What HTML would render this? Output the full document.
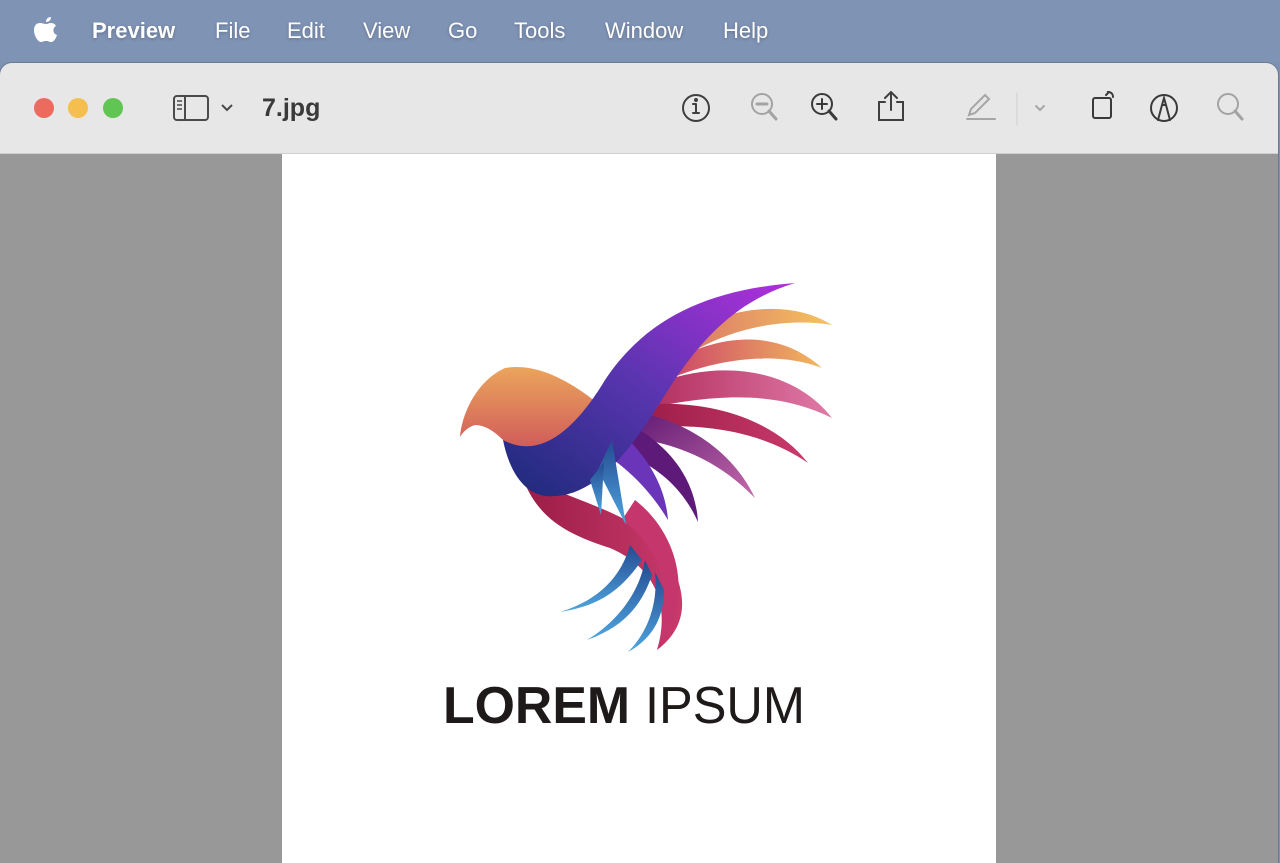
<!DOCTYPE html>
<html><head><meta charset="utf-8"><style>
body{margin:0;width:1280px;height:849px;overflow:hidden;background:#7d91b4;font-family:"Liberation Sans",sans-serif;position:relative}
.menu{position:absolute;left:0;top:0;width:1280px;height:62px;background:#7f93b5;color:#fff;font-size:22px}
.menu span{position:absolute;top:18px;text-shadow:0 1px 3px rgba(0,0,0,.25)}
.win{position:absolute;left:0;top:63px;width:1278px;height:800px;border-radius:12px 12px 0 0;overflow:hidden;background:#989898;box-shadow:0 0 0 1px #6c7b95}
.tb{position:absolute;left:0;top:0;width:100%;height:90px;background:#e7e7e7;border-bottom:1px solid #cfcfcf}
.dot{position:absolute;top:35px;width:20px;height:20px;border-radius:50%}
.page{position:absolute;left:282px;top:91px;width:714px;height:720px;background:#fff}
svg.i{position:absolute}
</style></head><body>
<div class="menu">
<svg style="position:absolute;left:33px;top:15px" width="26" height="30" viewBox="0 0 26 30"><path fill="#fff" d="M18 2c0 3-2 5-5 5 0-3 2-5 5-5zM13 9c2 0 3-1 5-1 2 0 4 1 5 3-4 2-3 8 1 9-1 3-3 7-6 7-2 0-2-1-5-1s-3 1-5 1c-3 0-7-6-7-12 0-5 3-7 6-7 2 0 4 1 6 1z"/></svg>
<span style="left:92px;font-weight:bold">Preview</span>
<span style="left:215px">File</span><span style="left:287px">Edit</span><span style="left:363px">View</span><span style="left:448px">Go</span><span style="left:514px">Tools</span><span style="left:605px">Window</span><span style="left:723px">Help</span>
</div>
<div class="win">
<div class="tb">
<div class="dot" style="left:34px;background:#ed6a5e"></div>
<div class="dot" style="left:68px;background:#f5bf4f"></div>
<div class="dot" style="left:103px;background:#61c554"></div>
<svg class="i" style="left:172px;top:32px" width="66" height="26" viewBox="0 0 66 26" fill="none" stroke="#4a4a4a" stroke-width="2"><rect x="2" y="1" width="34" height="24" rx="3"/><line x1="13" y1="1" x2="13" y2="25"/><path d="M5 6h5M5 10h5M5 14h5" stroke-width="1.5"/><path d="M50 10l5 5 5-5"/></svg>
<div style="position:absolute;left:262px;top:31px;font-size:25px;font-weight:bold;color:#3a3a3a">7.jpg</div>
<svg class="i" style="left:680px;top:28px" width="580" height="36" viewBox="680 91 580 36" fill="none" stroke-width="2" stroke-linecap="round">
<g stroke="#3f3f3f"><circle cx="696" cy="108" r="13"/><path d="M696 104v9M693 113h6M693 104h3" /><circle cx="696" cy="100" r="1" fill="#3f3f3f"/></g>
<g stroke="#a3a3a3"><circle cx="762" cy="104" r="10"/><path d="M757 104h10M769 111l7 8" stroke-width="3"/></g>
<g stroke="#3a3a3a"><circle cx="822" cy="104" r="10"/><path d="M817 104h10M822 99v10"/><path d="M829 111l7 8" stroke-width="3"/></g>
<g stroke="#3f3f3f"><path d="M885 102h-6v18h24v-18h-6M891 110v-17M885 98l6-6 6 6"/></g>
<g stroke="#a6a6a6"><path d="M969 115l2-6 14-14 4 4-14 14zM967 119h28"/><line x1="1017" y1="93" x2="1017" y2="125" stroke="#cfcfcf" stroke-width="1"/><path d="M1036 106l4 4 4-4"/></g>
<g stroke="#3a3a3a"><rect x="1093" y="98" width="18" height="20" rx="2"/><path d="M1108 92c3 0 5 2 5 5M1106 89l3 3-3 3"/></g>
<g stroke="#3a3a3a"><circle cx="1164" cy="108" r="13"/><path d="M1158 120l4-15h4l4 15M1162 105l2-7 2 7"/></g>
<g stroke="#a3a3a3"><circle cx="1228" cy="104" r="10"/><path d="M1235 111l7 8" stroke-width="3"/></g>
</svg>
</div>
<div class="page"></div>
</div>
<svg style="position:absolute;left:0;top:0" width="1280" height="849">
<defs>
<linearGradient id="or" x1="0" y1="0" x2="0" y2="1"><stop offset="0" stop-color="#eba55c"/><stop offset="1" stop-color="#c9475a"/></linearGradient>
<linearGradient id="band" x1="1" y1="0" x2="0" y2="1"><stop offset="0" stop-color="#b12fdc"/><stop offset=".5" stop-color="#5a35b0"/><stop offset="1" stop-color="#1b2a78"/></linearGradient>
<linearGradient id="f1" x1="0" y1="0" x2="1" y2="0"><stop offset="0" stop-color="#d6706a"/><stop offset="1" stop-color="#f6c45e"/></linearGradient>
<linearGradient id="f2" x1="0" y1="0" x2="1" y2="0"><stop offset="0" stop-color="#c83a6a"/><stop offset="1" stop-color="#f2b85e"/></linearGradient>
<linearGradient id="f3" x1="0" y1="0" x2="1" y2="0"><stop offset="0" stop-color="#b02b5a"/><stop offset="1" stop-color="#e07aa8"/></linearGradient>
<linearGradient id="f4" x1="0" y1="0" x2="1" y2="1"><stop offset="0" stop-color="#5a1570"/><stop offset="1" stop-color="#c46aaa"/></linearGradient>
<linearGradient id="bl" x1="0" y1="0" x2="0" y2="1"><stop offset="0" stop-color="#244a90"/><stop offset="1" stop-color="#4fa6e0"/></linearGradient>
<linearGradient id="rd" x1="0" y1="0" x2="1" y2="0"><stop offset="0" stop-color="#9a1c45"/><stop offset="1" stop-color="#c93a6c"/></linearGradient>
</defs>
<path fill="url(#f1)" d="M670 345C720 305 790 298 832 325C790 318 730 325 680 360Z"/>
<path fill="url(#f2)" d="M660 368C720 330 780 330 822 368C780 352 720 355 655 385Z"/>
<path fill="url(#f3)" d="M645 388C720 355 795 370 832 418C780 392 720 392 640 410Z"/>
<path fill="url(#rd)" d="M638 405C710 398 775 420 808 463C760 430 700 422 632 428Z"/>
<path fill="url(#f4)" d="M628 410C690 420 735 455 755 498C720 462 680 443 622 436Z"/>
<path fill="#5e1a78" d="M618 418C665 440 695 475 698 522C680 482 650 462 612 448Z"/>
<path fill="#6a35b8" d="M605 420C640 445 665 480 668 520C650 490 625 465 598 450Z"/>
<path fill="url(#rd)" d="M520 470C560 500 620 505 660 545C690 590 690 625 657 650C672 600 650 565 610 548C570 535 535 520 520 470Z"/>
<path fill="#c5366c" d="M635 500C680 535 695 600 657 650C672 600 665 550 622 520Z"/>
<path fill="url(#or)" d="M460 437C462 412 478 380 505 368C540 362 575 385 600 405L595 470L515 455C505 440 490 425 475 425C468 427 463 432 460 437Z"/>
<path fill="url(#band)" d="M503 440C540 460 575 430 605 380C645 320 705 290 795 283C745 298 705 330 665 395C625 460 590 500 545 496C520 492 508 465 503 440Z"/>
<path fill="url(#bl)" d="M598 470L612 440L626 525Z"/>
<path fill="url(#bl)" d="M590 480L604 462L601 515Z"/>
<path fill="url(#bl)" d="M560 612C600 600 622 575 630 545L642 560C620 592 598 606 560 612Z"/>
<path fill="url(#bl)" d="M587 640C620 620 640 590 645 560L652 575C640 610 620 628 587 640Z"/>
<path fill="url(#bl)" d="M628 652C650 630 658 600 655 572L664 590C664 620 650 640 628 652Z"/>
<text x="443" y="723" font-family="Liberation Sans" font-weight="bold" font-size="52" fill="#1e1a1a" textLength="187" lengthAdjust="spacingAndGlyphs">LOREM</text>
<text x="645" y="723" font-family="Liberation Sans" font-size="52" fill="#1e1a1a" textLength="160" lengthAdjust="spacingAndGlyphs">IPSUM</text>
</svg>
</body></html>
